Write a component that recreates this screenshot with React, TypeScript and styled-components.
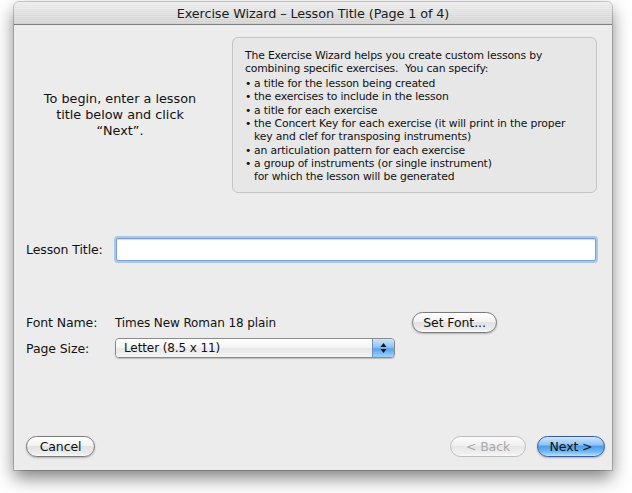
import React from 'react'
import styled, { createGlobalStyle } from 'styled-components'

const GlobalStyle = createGlobalStyle`
  html, body {
    margin: 0;
    padding: 0;
    background: #ffffff;
  }
  body {
    font-family: "DejaVu Sans", "Liberation Sans", sans-serif;
    color: #111;
  }
`

const Page = styled.div`
  width: 632px;
  height: 493px;
  padding: 2px 0 0 14px;
  box-sizing: border-box;
`

const Window = styled.div`
  width: 598px;
  height: 468px;
  display: flex;
  flex-direction: column;
  background: #ececec;
  border-radius: 5px 5px 0 0;
  box-shadow: 0 8px 18px rgba(0, 0, 0, 0.5), 0 0 0 1px rgba(0, 0, 0, 0.18);
  overflow: hidden;
`

const TitleBar = styled.div`
  height: 22px;
  flex: none;
  display: flex;
  align-items: center;
  justify-content: center;
  background:
    repeating-linear-gradient(rgba(255, 255, 255, 0.25) 0 1px, rgba(0, 0, 0, 0) 1px 2px),
    linear-gradient(#ececec, #dcdcdc 55%, #cfcfcf);
  border-bottom: 1px solid #7f7f7f;
  font-size: 12.8px;
  color: #1c1c1c;
  letter-spacing: -0.1px;
`

const Body = styled.div`
  flex: 1;
  display: flex;
  flex-direction: column;
  padding: 12px 15px 13px 12px;
`

const TopSection = styled.div`
  display: flex;
  align-items: center;
`

const Intro = styled.div`
  width: 206px;
  text-align: center;
  font-size: 12.8px;
  line-height: 16px;
  padding: 0 32px 0 14px;
  box-sizing: border-box;
`

const InfoBox = styled.div`
  flex: 1;
  height: 156px;
  box-sizing: border-box;
  border: 1px solid #c4c4c4;
  border-radius: 6px;
  background: #e7e7e7;
  padding: 11px 6px 0 12px;
  font-size: 10.8px;
  line-height: 13.3px;
  letter-spacing: -0.15px;
  white-space: nowrap;
`

const InfoPara = styled.p`
  margin: 0 0 1.5px 0;
`

const BulletList = styled.ul`
  margin: 0;
  padding: 0;
  list-style: none;
`

const Bullet = styled.li`
  display: flex;
  &::before {
    content: '•';
    width: 9px;
    flex: none;
  }
`

const FieldRow = styled.div<{ $top: number }>`
  display: flex;
  align-items: center;
  margin-top: ${p => p.$top}px;
  font-size: 12.5px;
  letter-spacing: -0.1px;
`

const Label = styled.div`
  width: 89px;
  flex: none;
`

const TextInput = styled.input`
  flex: 1;
  height: 23px;
  box-sizing: border-box;
  border: 1px solid #7e9fc9;
  background: #fff;
  box-shadow: 0 0 0 2px #a9c7ec, inset 0 1px 1px rgba(0, 0, 0, 0.15);
  border-radius: 2px;
  margin: 0 1px 0 1px;
  outline: none;
`

const Value = styled.div`
  width: 297px;
  flex: none;
  font-size: 12px;
  letter-spacing: -0.1px;
`

const AquaButton = styled.button<{ $variant?: 'default' | 'primary' | 'disabled'; $width: number }>`
  width: ${p => p.$width}px;
  height: 21px;
  border-radius: 11px;
  font-family: "DejaVu Sans", "Liberation Sans", sans-serif;
  font-size: 12.5px;
  letter-spacing: -0.1px;
  padding: 0;
  box-sizing: border-box;
  border: 1px solid ${p => (p.$variant === 'primary' ? '#3a5a98' : p.$variant === 'disabled' ? '#bdbdbd' : '#7b7b7b')};
  color: ${p => (p.$variant === 'disabled' ? '#a8a8a8' : '#111')};
  background: ${p =>
    p.$variant === 'primary'
      ? 'linear-gradient(#cfe6fd 0%, #8fc4f7 40%, #4f9cec 50%, #74bcf8 80%, #bfe4ff 100%)'
      : p.$variant === 'disabled'
      ? 'linear-gradient(#fbfbfb 0%, #f0f0f0 45%, #e6e6e6 50%, #efefef 85%, #f8f8f8 100%)'
      : 'linear-gradient(#ffffff 0%, #f3f3f3 45%, #e2e2e2 50%, #ececec 85%, #fafafa 100%)'};
  box-shadow: ${p => (p.$variant === 'disabled' ? 'none' : '0 1px 2px rgba(0, 0, 0, 0.25)')};
`

const Select = styled.div`
  width: 280px;
  height: 20px;
  box-sizing: border-box;
  display: flex;
  border: 1px solid #8a8a8a;
  border-radius: 4px;
  overflow: hidden;
  box-shadow: 0 1px 1px rgba(0, 0, 0, 0.2);
`

const SelectText = styled.div`
  flex: 1;
  display: flex;
  align-items: center;
  padding-left: 8px;
  font-size: 12px;
  background: linear-gradient(#ffffff 0%, #f5f5f5 45%, #e8e8e8 55%, #f4f4f4 100%);
`

const SelectArrows = styled.div`
  width: 21px;
  display: flex;
  align-items: center;
  justify-content: center;
  border-left: 1px solid #6f8fc0;
  background: linear-gradient(#cde4fc 0%, #8fc3f7 45%, #5aa2ec 55%, #9fd2fb 100%);
`

const ButtonRow = styled.div`
  margin-top: auto;
  margin-right: -8px;
  display: flex;
  align-items: center;
  gap: 11px;
`

const Spacer = styled.div`
  flex: 1;
`

const Arrows = () => (
  <svg width="7" height="12" viewBox="0 0 7 12">
    <path d="M3.5 1 L6.5 5 L0.5 5 Z" fill="#1a1a1a" />
    <path d="M3.5 11 L6.5 7 L0.5 7 Z" fill="#1a1a1a" />
  </svg>
)

const App = () => {
  return (
    <>
      <GlobalStyle />
      <Page>
        <Window>
          <TitleBar>Exercise Wizard – Lesson Title (Page 1 of 4)</TitleBar>
          <Body>
            <TopSection>
              <Intro>
                To begin, enter a lesson title below and click “Next”.
              </Intro>
              <InfoBox>
                <InfoPara>
                  The Exercise Wizard helps you create custom lessons by<br />
                  combining specific exercises.&nbsp; You can specify:
                </InfoPara>
                <BulletList>
                  <Bullet><span>a title for the lesson being created</span></Bullet>
                  <Bullet><span>the exercises to include in the lesson</span></Bullet>
                  <Bullet><span>a title for each exercise</span></Bullet>
                  <Bullet><span>the Concert Key for each exercise (it will print in the proper<br />key and clef for transposing instruments)</span></Bullet>
                  <Bullet><span>an articulation pattern for each exercise</span></Bullet>
                  <Bullet><span>a group of instruments (or single instrument)<br />for which the lesson will be generated</span></Bullet>
                </BulletList>
              </InfoBox>
            </TopSection>

            <FieldRow $top={45}>
              <Label>Lesson Title:</Label>
              <TextInput type="text" />
            </FieldRow>

            <FieldRow $top={51}>
              <Label>Font Name:</Label>
              <Value>Times New Roman 18 plain</Value>
              <AquaButton $width={85}>Set Font...</AquaButton>
            </FieldRow>

            <FieldRow $top={5}>
              <Label>Page Size:</Label>
              <Select>
                <SelectText>Letter (8.5 x 11)</SelectText>
                <SelectArrows>
                  <Arrows />
                </SelectArrows>
              </Select>
            </FieldRow>

            <ButtonRow>
              <AquaButton $width={69}>Cancel</AquaButton>
              <Spacer />
              <AquaButton $variant="disabled" $width={76}>&lt; Back</AquaButton>
              <AquaButton $variant="primary" $width={68}>Next &gt;</AquaButton>
            </ButtonRow>
          </Body>
        </Window>
      </Page>
    </>
  )
}

export default App
